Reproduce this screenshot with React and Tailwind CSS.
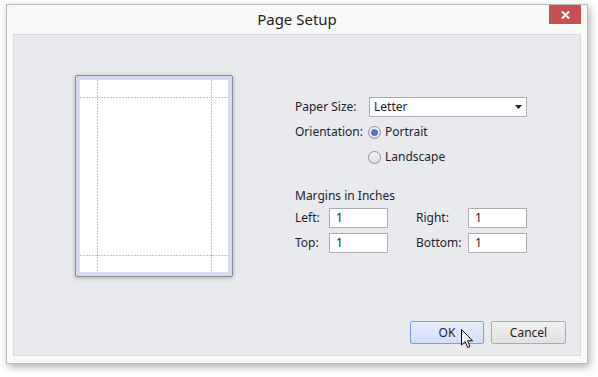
import React from 'react'

const font = { fontFamily: '"Noto Sans", "Open Sans", sans-serif' }

function Radio({ checked }) {
  return (
    <svg width="13" height="13" viewBox="0 0 13 13" className="shrink-0">
      <defs>
        <linearGradient id={checked ? 'rg1' : 'rg0'} x1="0" y1="0" x2="0" y2="1">
          <stop offset="0" stopColor="#f4f4f4" />
          <stop offset="1" stopColor="#dcdcdc" />
        </linearGradient>
      </defs>
      <circle cx="6.5" cy="6.5" r="6" fill={`url(#${checked ? 'rg1' : 'rg0'})`} stroke="#8f8f8f" />
      {checked && <circle cx="6.5" cy="6.5" r="3" fill="#5a74c8" stroke="#3d56a8" strokeWidth="0.8" />}
    </svg>
  )
}

function Field({ value, className = '' }) {
  return (
    <div className={`h-[20px] bg-white border border-[#abadb3] pl-[6px] text-[12px] leading-[18px] text-[#1e1e2e] ${className}`}>
      {value}
    </div>
  )
}

function PagePreview() {
  return (
    <div className="w-[158px] h-[202px] shrink-0 rounded-[2px] border border-[#8b8b8b] bg-[#d5dbf3] p-[4px] shadow-[0_1px_4px_rgba(0,0,0,0.25)]">
      <svg width="148" height="192" className="block bg-white">
        <g stroke="#c4c4c4" strokeDasharray="2 1" strokeWidth="1">
          <line x1="17.5" y1="0" x2="17.5" y2="192" />
          <line x1="131.5" y1="0" x2="131.5" y2="192" />
          <line x1="0" y1="17.5" x2="148" y2="17.5" />
          <line x1="0" y1="175.5" x2="148" y2="175.5" />
        </g>
      </svg>
    </div>
  )
}

export default function App() {
  return (
    <div className="w-[598px] h-[377px] bg-white pl-[6px] pt-[4px]" style={font}>
      <div className="relative w-[582px] h-[360px] border border-[#bcbcbc] bg-[#f8f8f8] flex flex-col shadow-[2px_3px_8px_rgba(0,0,0,0.3)]">
        {/* title bar */}
        <div className="h-[29px] flex items-center justify-center text-[15px] text-[#1e1e1e]">
          Page Setup
        </div>
        <div className="absolute right-[6px] top-0 w-[32px] h-[19px] bg-[#c75050] flex items-center justify-center">
          <svg width="9" height="8" viewBox="0 0 9 8">
            <path d="M1 0.5 L8 7.5 M8 0.5 L1 7.5" stroke="#fff" strokeWidth="2" />
          </svg>
        </div>

        {/* content panel */}
        <div className="mx-[6px] mb-[7px] flex-1 border border-[#d9d9d9] bg-[#e9eaee] flex flex-col">
          <div className="flex pl-[61px] pt-[40px]">
            <PagePreview />
            <div className="ml-[62px] pt-[22px] text-[12px] text-[#1e1e2e]">
              <div className="flex items-center h-[20px]">
                <span className="w-[74px]">Paper Size:</span>
                <div className="relative w-[158px] h-[20px] bg-white border border-[#abadb3] pl-[4px] leading-[18px]">
                  Letter
                  <svg className="absolute right-[4px] top-[7px]" width="7" height="4" viewBox="0 0 7 4">
                    <path d="M0 0 H7 L3.5 4 Z" fill="#1e1e2e" />
                  </svg>
                </div>
              </div>
              <div className="flex items-center mt-[6px] h-[18px]">
                <span className="w-[73px]">Orientation:</span>
                <Radio checked />
                <span className="ml-[4px]">Portrait</span>
              </div>
              <div className="flex items-center mt-[7px] h-[18px] pl-[73px]">
                <Radio />
                <span className="ml-[4px]">Landscape</span>
              </div>
              <div className="mt-[21px] h-[18px] leading-[18px]">Margins in Inches</div>
              <div className="grid grid-cols-[34px_59px_28px_52px_59px] items-center gap-y-[5px] mt-[3px]">
                <span>Left:</span>
                <Field value="1" />
                <span />
                <span>Right:</span>
                <Field value="1" />
                <span>Top:</span>
                <Field value="1" />
                <span />
                <span>Bottom:</span>
                <Field value="1" />
              </div>
            </div>
          </div>
          <div className="flex-1" />
          <div className="flex justify-end gap-[7px] pr-[14px] pb-[11px] text-[12px] text-[#1e1e1e]">
            <div className="relative w-[74px] h-[23px] rounded-[2px] border border-[#7f9ed8] bg-gradient-to-b from-[#e6edfb] to-[#d3def6] flex items-center justify-center">
              OK
              <svg className="absolute left-[50px] top-[7px]" width="13" height="20" viewBox="0 0 13 20">
                <path d="M0.5 0.5 V16 L4.2 12.5 L6.7 18.5 L9 17.5 L6.6 11.8 H11.5 Z" fill="#fff" stroke="#000" strokeWidth="1" strokeLinejoin="miter" />
              </svg>
            </div>
            <div className="w-[75px] h-[23px] rounded-[2px] border border-[#acacac] bg-gradient-to-b from-[#f0f0f0] to-[#e2e2e2] flex items-center justify-center">
              Cancel
            </div>
          </div>
        </div>
      </div>
    </div>
  )
}
